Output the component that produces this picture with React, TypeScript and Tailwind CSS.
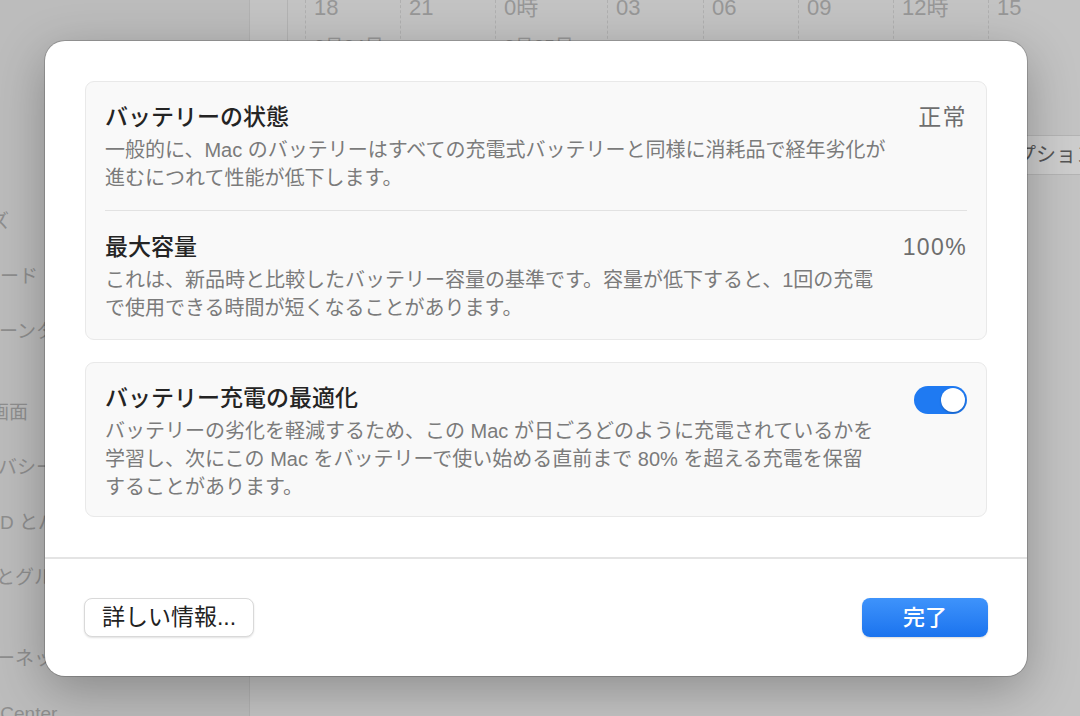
import React from 'react';

const font = "font-['Liberation_Sans','Noto_Sans_CJK_JP',sans-serif]";

type SideItemProps = { pre: string; post?: string; end: number; gap?: boolean };

const sideItems: SideItemProps[] = [
  { pre: 'サイズ', end: 9 },
  { pre: 'キーボード', end: 38 },
  { pre: 'スクリーンタ', post: 'イム', end: 55 },
  { pre: 'ロック画面', end: 28, gap: true },
  { pre: 'プライバ', post: 'シーとセキュリティ', end: 17 },
  { pre: 'Touch ID と', post: 'パスワード', end: 38 },
  { pre: 'ユーザと', post: 'グループ', end: 15 },
  { pre: 'インターネ', post: 'ットアカウント', end: 34, gap: true },
  { pre: 'Game C', post: 'enter', end: 14 },
];

// chart columns behind the sheet: width, label, date
const chartCols = [
  { w: 95, label: '18', date: '2月24日' },
  { w: 95, label: '21' },
  { w: 112, label: '0時', date: '2月25日' },
  { w: 96, label: '03' },
  { w: 95, label: '06' },
  { w: 95, label: '09' },
  { w: 95, label: '12時' },
  { w: 95, label: '15' },
];

function SideItem({ pre, post, end, gap }: SideItemProps) {
  return (
    <div className={`flex h-[55px] items-center whitespace-nowrap ${gap ? 'mt-[26px]' : ''}`}>
      <div className="flex shrink-0 justify-end" style={{ width: end }}>
        <span className="shrink-0">{pre}</span>
      </div>
      {post && <span className="shrink-0">{post}</span>}
    </div>
  );
}

function Toggle() {
  return (
    <div className="flex h-[28px] w-[53px] shrink-0 items-center justify-end rounded-full bg-[#1f7af2] px-[2px]">
      <div className="h-[24px] w-[24px] rounded-full bg-white shadow-[0_1px_2px_rgba(0,0,0,0.25)]" />
    </div>
  );
}

function Row({
  title,
  lines,
  value,
  className,
  right,
}: {
  title: string;
  lines: string[];
  value?: string;
  className?: string;
  right?: React.ReactNode;
}) {
  return (
    <div className={`flex items-start justify-between ${className ?? ''}`}>
      <div>
        <div className="text-[23px] font-medium leading-[28px] text-[#242424]">{title}</div>
        <div className="mt-[5px] whitespace-nowrap text-[20px] leading-[28px] text-[#7b7b7b]">
          {lines.map((l, i) => (
            <div key={i}>{l}</div>
          ))}
        </div>
      </div>
      {value && <div className="text-[23px] leading-[28px] tracking-[0.06em] text-[#6e6e6e]">{value}</div>}
      {right}
    </div>
  );
}

export default function App() {
  return (
    <div className={`relative h-[716px] w-[1080px] overflow-hidden ${font}`}>
      <div className="flex h-full w-full">
        {/* sidebar */}
        <div className="h-full w-[250px] shrink-0 overflow-hidden border-r border-[#b2b2b2] bg-[#bcbcbc] pt-[195px] text-[19px] text-[#8e8e8e]">
          {sideItems.map((it, i) => (
            <SideItem key={i} {...it} />
          ))}
        </div>

        {/* main pane */}
        <div className="h-full flex-1 overflow-hidden bg-[#c3c3c3]">
          <div className="flex h-[90px] pl-[37px]">
            <div className="w-[18px] shrink-0 border-l border-[#b3b3b3]" />
            {chartCols.map((c, i) => (
              <div
                key={i}
                className="shrink-0 border-l border-dashed border-[#b0b0b0] pl-[8px] whitespace-nowrap"
                style={{ width: c.w }}
              >
                <div className="-mt-[5px] text-[22px] leading-[26px] text-[#979797]">{c.label}</div>
                {c.date && <div className="mt-[14px] text-[19px] leading-[24px] text-[#979797]">{c.date}</div>}
              </div>
            ))}
          </div>
          <div className="mt-[45px] ml-[733px] flex h-[40px] w-[200px] items-center rounded-[6px] border border-[#b4b4b4] bg-[#cdcdcd] px-[12px] text-[20px] whitespace-nowrap text-[#555]">
            オプション…
          </div>
        </div>
      </div>

      {/* sheet */}
      <div className="absolute left-[45px] top-[41px] flex h-[635px] w-[982px] flex-col rounded-[20px] bg-white shadow-[0_14px_50px_rgba(0,0,0,0.28),0_0_0_1px_rgba(0,0,0,0.18)]">
        <div className="px-[40px] pt-[40px] pb-[40px]">
          <div className="rounded-[9px] border border-[#e9e9e9] bg-[#f9f9f9] px-[19px]">
            <Row
              className="border-b border-[#e2e2e2] pt-[21px] pb-[18px]"
              title="バッテリーの状態"
              value="正常"
              lines={[
                '一般的に、Mac のバッテリーはすべての充電式バッテリーと同様に消耗品で経年劣化が',
                '進むにつれて性能が低下します。',
              ]}
            />
            <Row
              className="pt-[22px] pb-[17px]"
              title="最大容量"
              value="100%"
              lines={[
                'これは、新品時と比較したバッテリー容量の基準です。容量が低下すると、1回の充電',
                'で使用できる時間が短くなることがあります。',
              ]}
            />
          </div>

          <div className="mt-[22px] rounded-[9px] border border-[#e9e9e9] bg-[#f9f9f9] px-[19px] pt-[21px] pb-[15px]">
            <Row
              title="バッテリー充電の最適化"
              lines={[
                'バッテリーの劣化を軽減するため、この Mac が日ごろどのように充電されているかを',
                '学習し、次にこの Mac をバッテリーで使い始める直前まで 80% を超える充電を保留',
                'することがあります。',
              ]}
              right={
                <div className="pt-[2px]">
                  <Toggle />
                </div>
              }
            />
          </div>
        </div>

        <div className="h-[2px] bg-[#e4e4e4]" />

        <div className="flex items-center justify-between px-[39px] pt-[39px]">
          <button className="flex h-[39px] w-[170px] items-center justify-center rounded-[8px] border border-[#d9d9d9] bg-white text-[23px] text-[#222] shadow-[0_1px_2px_rgba(0,0,0,0.12)]">
            詳しい情報...
          </button>
          <button className="flex h-[39px] w-[126px] items-center justify-center rounded-[8px] bg-gradient-to-b from-[#3e93fb] to-[#1a73ee] text-[22px] font-medium text-white shadow-[0_1px_2px_rgba(0,0,0,0.15)]">
            完了
          </button>
        </div>
      </div>
    </div>
  );
}
